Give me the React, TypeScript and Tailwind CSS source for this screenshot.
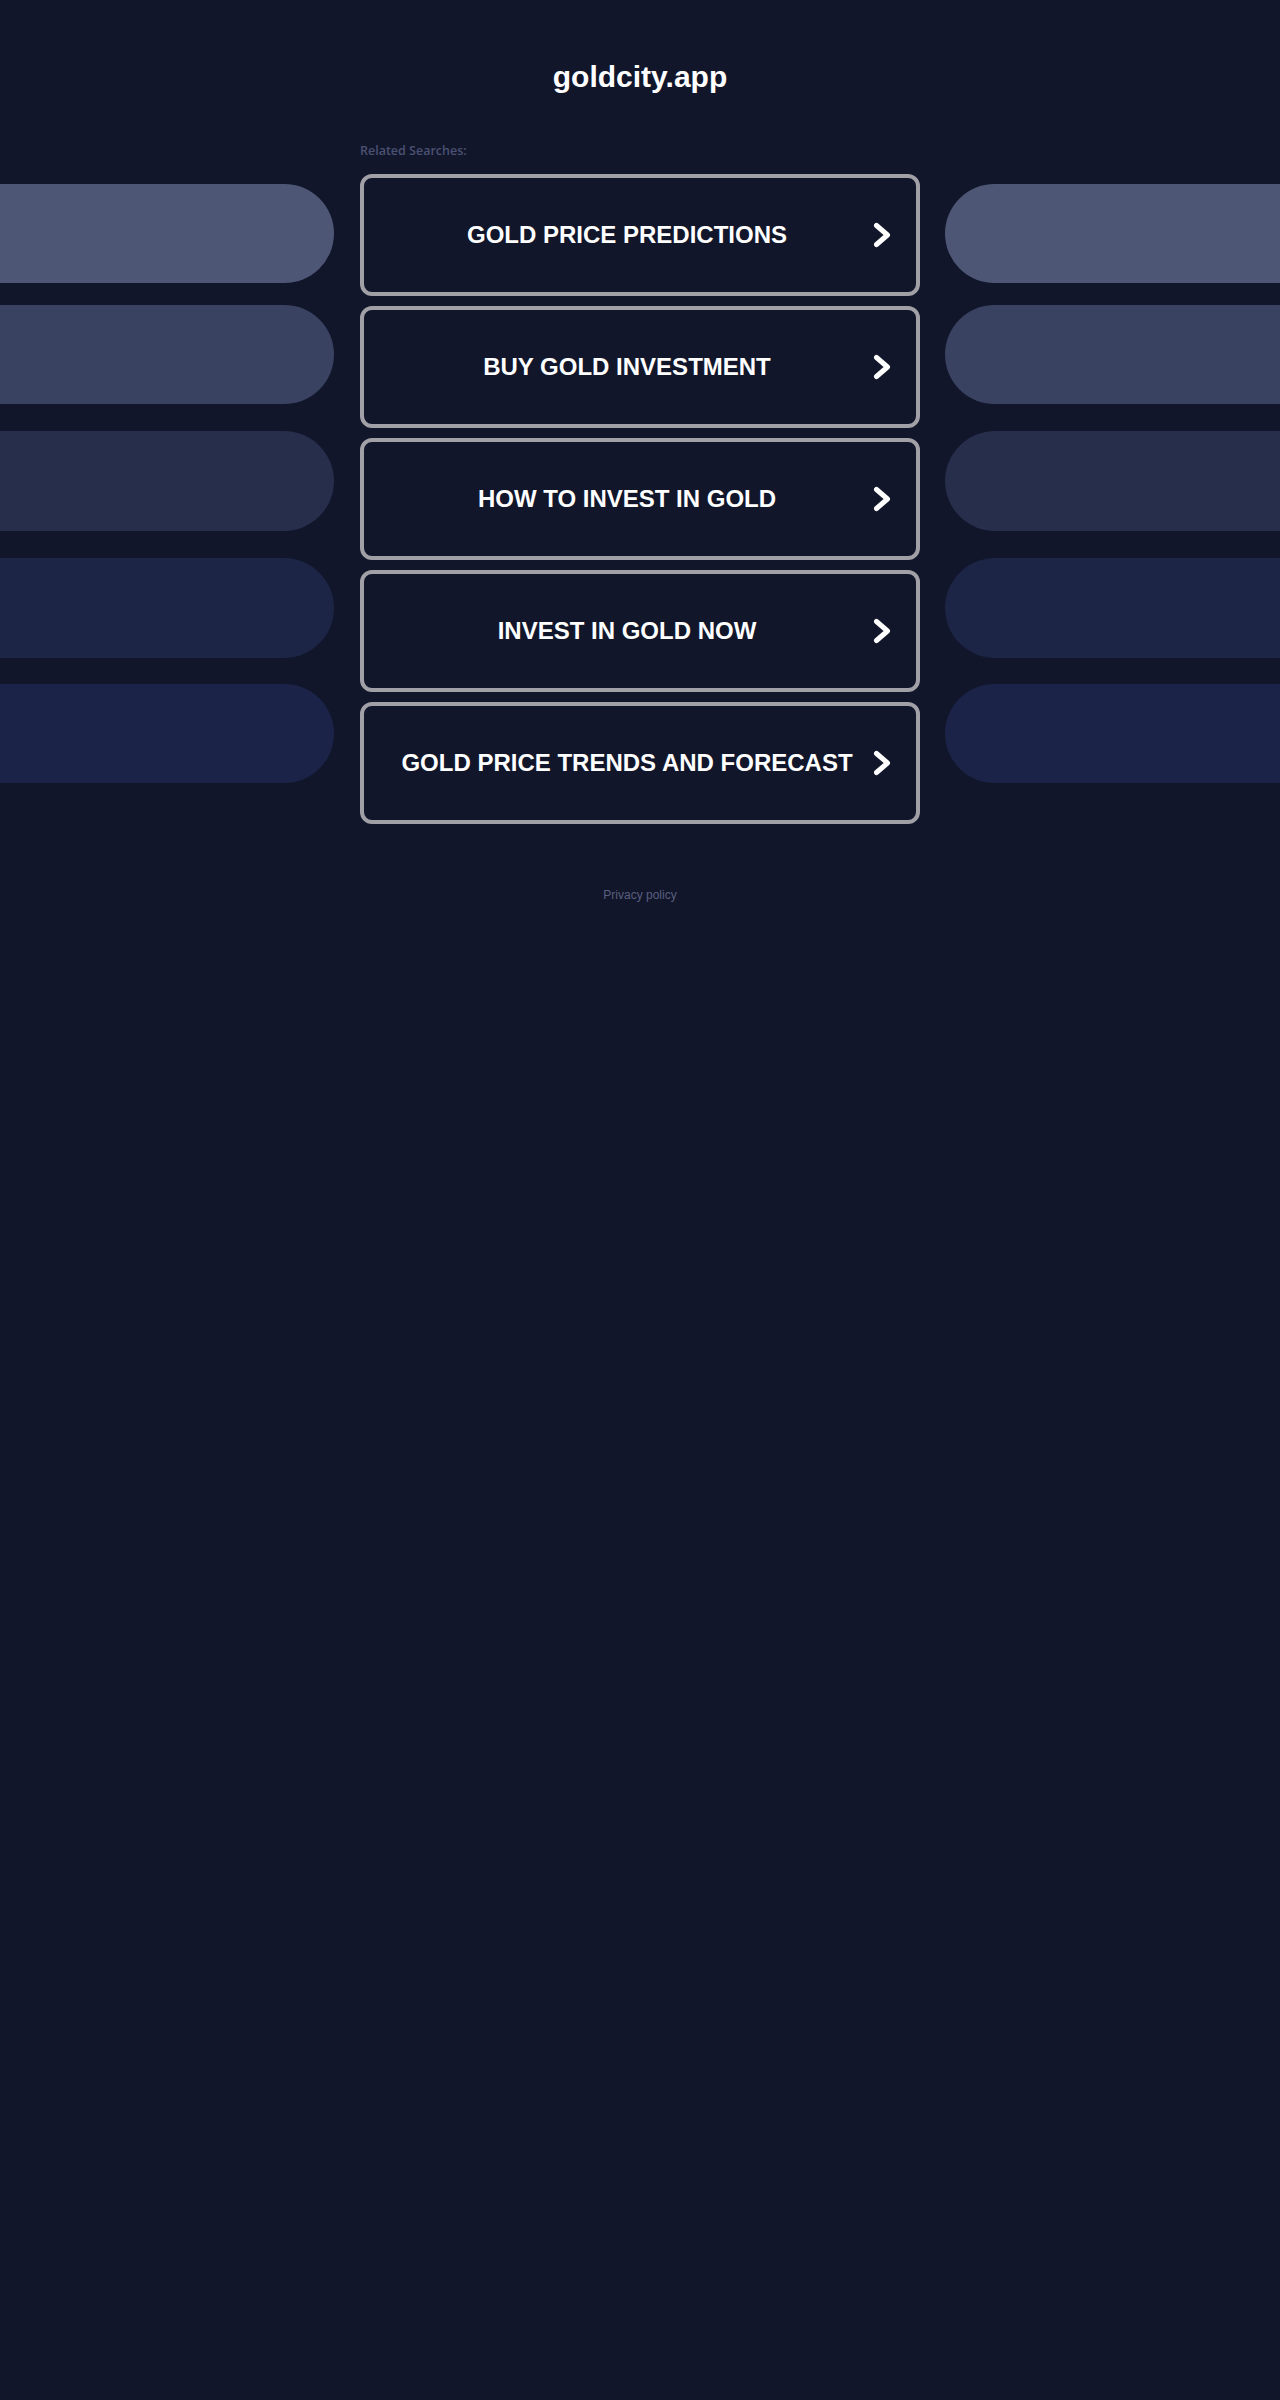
import React from "react";

const items = [
  "GOLD PRICE PREDICTIONS",
  "BUY GOLD INVESTMENT",
  "HOW TO INVEST IN GOLD",
  "INVEST IN GOLD NOW",
  "GOLD PRICE TRENDS AND FORECAST",
];

function Chevron() {
  return (
    <svg width="20" height="26" viewBox="0 0 20 26" className="shrink-0">
      <polyline
        points="4.5,3.5 15.5,13 4.5,22.5"
        fill="none"
        stroke="#ffffff"
        strokeWidth="5"
        strokeLinecap="round"
        strokeLinejoin="round"
      />
    </svg>
  );
}

function LeftPills() {
  return (
    <div className="flex w-[334px] shrink-0 flex-col pt-[44px]">
      <div className="h-[99px] rounded-r-[50px] bg-[#4d5674]" />
      <div className="mt-[22px] h-[99px] rounded-r-[50px] bg-[#3a4261]" />
      <div className="mt-[27px] h-[100px] rounded-r-[50px] bg-[#272e4c]" />
      <div className="mt-[27px] h-[100px] rounded-r-[50px] bg-[#1d2546]" />
      <div className="mt-[26px] h-[99px] rounded-r-[50px] bg-[#1b2448]" />
    </div>
  );
}

function RightPills() {
  return (
    <div className="ml-[25px] flex flex-1 flex-col pt-[44px]">
      <div className="h-[99px] rounded-l-[50px] bg-[#4d5674]" />
      <div className="mt-[22px] h-[99px] rounded-l-[50px] bg-[#3a4261]" />
      <div className="mt-[27px] h-[100px] rounded-l-[50px] bg-[#272e4c]" />
      <div className="mt-[27px] h-[100px] rounded-l-[50px] bg-[#1d2546]" />
      <div className="mt-[26px] h-[99px] rounded-l-[50px] bg-[#1b2448]" />
    </div>
  );
}

export default function App() {
  return (
    <div className="min-h-[2400px] w-full bg-[#11162b] font-['Liberation_Sans',Arial,sans-serif]">
      <h1 className="pt-[60px] text-center text-[30px] font-bold leading-[34px] text-white">
        goldcity.app
      </h1>
      <div className="mt-[46px] flex w-full">
        <LeftPills />
        <div className="ml-[26px] flex w-[560px] shrink-0 flex-col">
          <div className="mt-[3px] font-['Open_Sans',sans-serif] text-[12.5px] font-semibold leading-[16px] text-[#4b5172]">
            Related Searches:
          </div>
          <div className="mt-[15px] flex flex-col gap-[10px]">
            {items.map((t) => (
              <a
                key={t}
                href="#"
                className="flex h-[122px] items-center rounded-[12px] border-[4px] border-[#a0a0a6] bg-[#11162b] pl-[23px] pr-[24px]"
              >
                <span className="flex-1 pr-[5px] text-center text-[24px] font-bold leading-[28px] text-white">
                  {t}
                </span>
                <Chevron />
              </a>
            ))}
          </div>
        </div>
        <RightPills />
      </div>
      <div className="mt-[63px] text-center text-[12px] leading-[16px] text-[#5a5f7e]">
        <a href="#">Privacy policy</a>
      </div>
    </div>
  );
}
